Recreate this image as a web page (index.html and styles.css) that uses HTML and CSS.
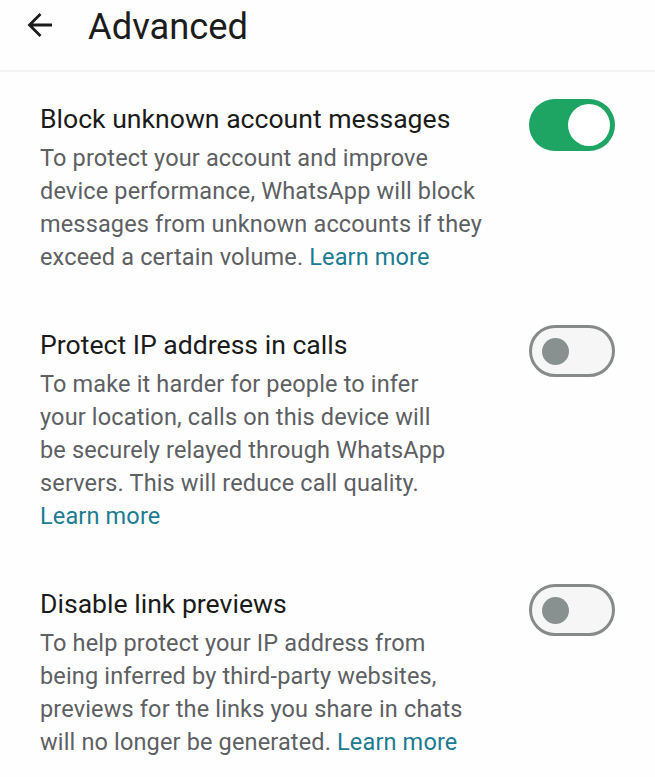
FILE: index.html
```html
<!DOCTYPE html>
<html lang="en">
<head>
<meta charset="utf-8">
<title>Advanced</title>
<link rel="stylesheet" href="styles.css">
</head>
<body>
<header class="appbar">
  <svg class="back" width="26" height="26" viewBox="0 0 26 26" aria-hidden="true">
    <path d="M25 13H2.5M13.5 2L2.5 13L13.5 24" fill="none" stroke="#1c1c1c" stroke-width="2.8"/>
  </svg>
  <h1 class="title">Advanced</h1>
</header>
<main class="list">
  <section class="row">
    <div class="text">
      <h2 class="row-title">Block unknown account messages</h2>
      <p class="desc">To protect your account and improve<br>device performance, WhatsApp will block<br>messages from unknown accounts if they<br>exceed a certain volume. <a class="link" href="#">Learn more</a></p>
    </div>
    <span class="toggle on"><span class="knob"></span></span>
  </section>
  <section class="row">
    <div class="text">
      <h2 class="row-title">Protect IP address in calls</h2>
      <p class="desc">To make it harder for people to infer<br>your location, calls on this device will<br>be securely relayed through WhatsApp<br>servers. This will reduce call quality.<br><a class="link" href="#">Learn more</a></p>
    </div>
    <span class="toggle off"><span class="knob"></span></span>
  </section>
  <section class="row">
    <div class="text">
      <h2 class="row-title">Disable link previews</h2>
      <p class="desc">To help protect your IP address from<br>being inferred by third-party websites,<br>previews for the links you share in chats<br>will no longer be generated. <a class="link" href="#">Learn more</a></p>
    </div>
    <span class="toggle off"><span class="knob"></span></span>
  </section>
</main>
</body>
</html>
```
FILE: styles.css
```css
* { box-sizing: border-box; }
html, body {
  margin: 0;
  padding: 0;
  background: #fefefe;
  font-family: Roboto, "Noto Sans", sans-serif;
}
.appbar {
  height: 72px;
  display: flex;
  align-items: flex-start;
  padding: 2px 0 0 27px;
  border-bottom: 2px solid #f3f3f3;
}
.back {
  margin-top: 10px;
  flex: none;
}
.title {
  margin: 0 0 0 35px;
  font-size: 36.3px;
  line-height: 50px;
  font-weight: 400;
  color: #1c1c1c;
}
.list {
  padding-top: 3px;
}
.row {
  display: flex;
  align-items: flex-start;
  justify-content: space-between;
  padding: 27px 40px 27px 40px;
}
.text {
  flex: 1;
  min-width: 0;
}
.row-title {
  margin: 0;
  font-size: 26.6px;
  line-height: 33px;
  font-weight: 400;
  color: #1b1b1b;
}
.desc {
  margin: 7px 0 0 0;
  font-size: 23.5px;
  letter-spacing: 0.15px;
  line-height: 33px;
  color: #5d6063;
}
.link {
  color: #1b7b91;
  text-decoration: none;
}
.toggle {
  flex: none;
  width: 86px;
  height: 52px;
  border-radius: 26px;
  margin-top: -3px;
  display: flex;
  align-items: center;
}
.toggle.on {
  background: #1ea463;
  justify-content: flex-end;
  padding-right: 5px;
}
.toggle.on .knob {
  width: 42px;
  height: 42px;
  border-radius: 50%;
  background: #ffffff;
}
.toggle.off {
  background: #f6f6f6;
  border: 3px solid #878a8a;
  padding-left: 10px;
}
.toggle.off .knob {
  width: 27px;
  height: 27px;
  border-radius: 50%;
  background: #899090;
}
```
